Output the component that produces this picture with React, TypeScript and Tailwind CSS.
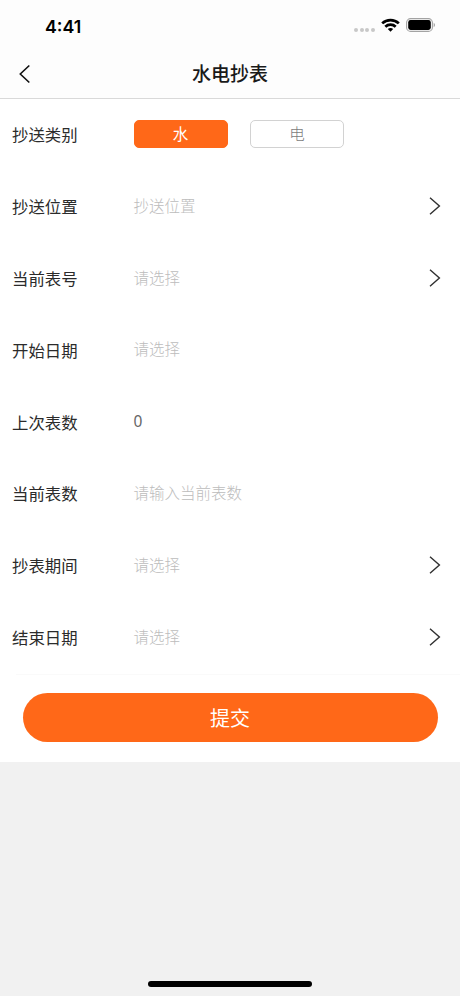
import { useState } from "react";

type Field = {
  label: string;
  value?: string;
  placeholder?: string;
  arrow?: boolean;
};

const fields: Field[] = [
  { label: "抄送位置", placeholder: "抄送位置", arrow: true },
  { label: "当前表号", placeholder: "请选择", arrow: true },
  { label: "开始日期", placeholder: "请选择" },
  { label: "上次表数", value: "0" },
  { label: "当前表数", placeholder: "请输入当前表数" },
  { label: "抄表期间", placeholder: "请选择", arrow: true },
  { label: "结束日期", placeholder: "请选择", arrow: true },
];

function StatusBar() {
  return (
    <div className="flex h-[50px] items-center justify-between pl-[45px] pr-[24px] pt-[2px]">
      <span className="pt-[1px] font-['Inter',sans-serif] text-[17.8px] font-semibold leading-6 text-black">
        4:41
      </span>
      <div className="flex items-center">
        <div className="mr-[6px] mt-[7px] flex gap-[1.6px]">
          {[0, 1, 2, 3].map((dot) => (
            <span key={dot} className="size-[4px] rounded-full bg-[#c8c8c8]" />
          ))}
        </div>
        <svg width="19" height="14" viewBox="0 0 19 14" fill="none" stroke="#000" strokeWidth="2.7" className="mr-[6px] -mt-[2px]">
          <path d="M1.2 5.4C5.8 .9 13.2 .9 17.8 5.4" />
          <path d="M4.3 8.8C7.2 6 11.8 6 14.7 8.8" />
          <path d="M9.5 13.8L6.8 11.1C8.3 9.7 10.7 9.7 12.2 11.1Z" fill="#000" stroke="none" />
        </svg>
        <svg width="30" height="14" viewBox="0 0 30 14" className="-mt-[2px]">
          <rect x=".6" y=".6" width="25.8" height="12.8" rx="4" fill="none" stroke="#a3a3a3" strokeWidth="1.1" />
          <rect x="2.2" y="2.1" width="22.6" height="9.8" rx="2.3" fill="#000" />
          <path d="M27.7 4.8C29.5 5.5 29.5 8.5 27.7 9.2Z" fill="#a3a3a3" />
        </svg>
      </div>
    </div>
  );
}

function Chevron() {
  return (
    <svg width="12" height="18" viewBox="0 0 12 18" fill="none" stroke="#303030" strokeWidth="1.4" className="ml-auto">
      <path d="M1 .8L10.4 9L1 17.2" />
    </svg>
  );
}

export default function App() {
  const [kind, setKind] = useState("水");

  return (
    <div className="flex h-[996px] w-[460px] flex-col bg-[#f1f1f1] font-['Noto_Sans_CJK_SC',sans-serif]">
      <header className="h-[99px] border-b border-[#d9d9d9] bg-[#fdfdfd]">
        <StatusBar />
        <div className="grid h-[47px] grid-cols-[60px_1fr_60px] items-center">
          <button className="pl-[18px]" aria-label="返回">
            <svg width="13" height="20" viewBox="0 0 13 20" fill="none" stroke="#111" strokeWidth="1.6">
              <path d="M11.3 1.5L2.3 10L11.3 18.5" />
            </svg>
          </button>
          <h1 className="-mt-[1px] text-center text-[19px] font-medium leading-7 text-[#1a1a1a]">水电抄表</h1>
        </div>
      </header>

      <main className="h-[663px] bg-white">
        <div className="flex h-[70.86px] items-center pl-[12px]">
          <span className="w-[121.5px] pb-[1px] text-[16.4px] text-[#2b2b2b]">抄送类别</span>
          <div className="flex gap-[22.5px]">
            {["水", "电"].map((name) => (
              <button
                key={name}
                onClick={() => setKind(name)}
                className={
                  kind === name
                    ? "h-[28px] w-[94px] rounded-[5px] border border-[#ff6818] bg-[#ff6818] pb-[1px] text-[15.5px] leading-none text-white"
                    : "h-[28px] w-[94px] rounded-[5px] border border-[#d2d2d2] bg-white pb-[1px] text-[15.5px] font-light leading-none text-[#7c7c7c]"
                }
              >
                {name}
              </button>
            ))}
          </div>
        </div>

        {fields.map((field) => (
          <div key={field.label} className="flex h-[71.86px] items-center pl-[12px] pr-[19px]">
            <span className="w-[121.5px] pt-[1px] text-[16.4px] text-[#2b2b2b]">{field.label}</span>
            {field.value ? (
              <span className="font-['Noto_Sans',sans-serif] text-[15.5px] text-[#666]">{field.value}</span>
            ) : (
              <span className="pb-[1px] text-[15.5px] font-light text-[#bcbcbc]">{field.placeholder}</span>
            )}
            {field.arrow && <Chevron />}
          </div>
        ))}

        <div className="ml-[16px] mt-[1px] border-t border-[#fafafa] pl-[6.5px] pr-[22.5px] pt-[18px]">
          <button className="h-[49px] w-full rounded-full bg-[#ff6818] pt-[1px] text-[20px] text-white">提交</button>
        </div>
      </main>

      <div className="mx-auto mb-[9px] mt-auto h-[6px] w-[164px] rounded-full bg-black" />
    </div>
  );
}
